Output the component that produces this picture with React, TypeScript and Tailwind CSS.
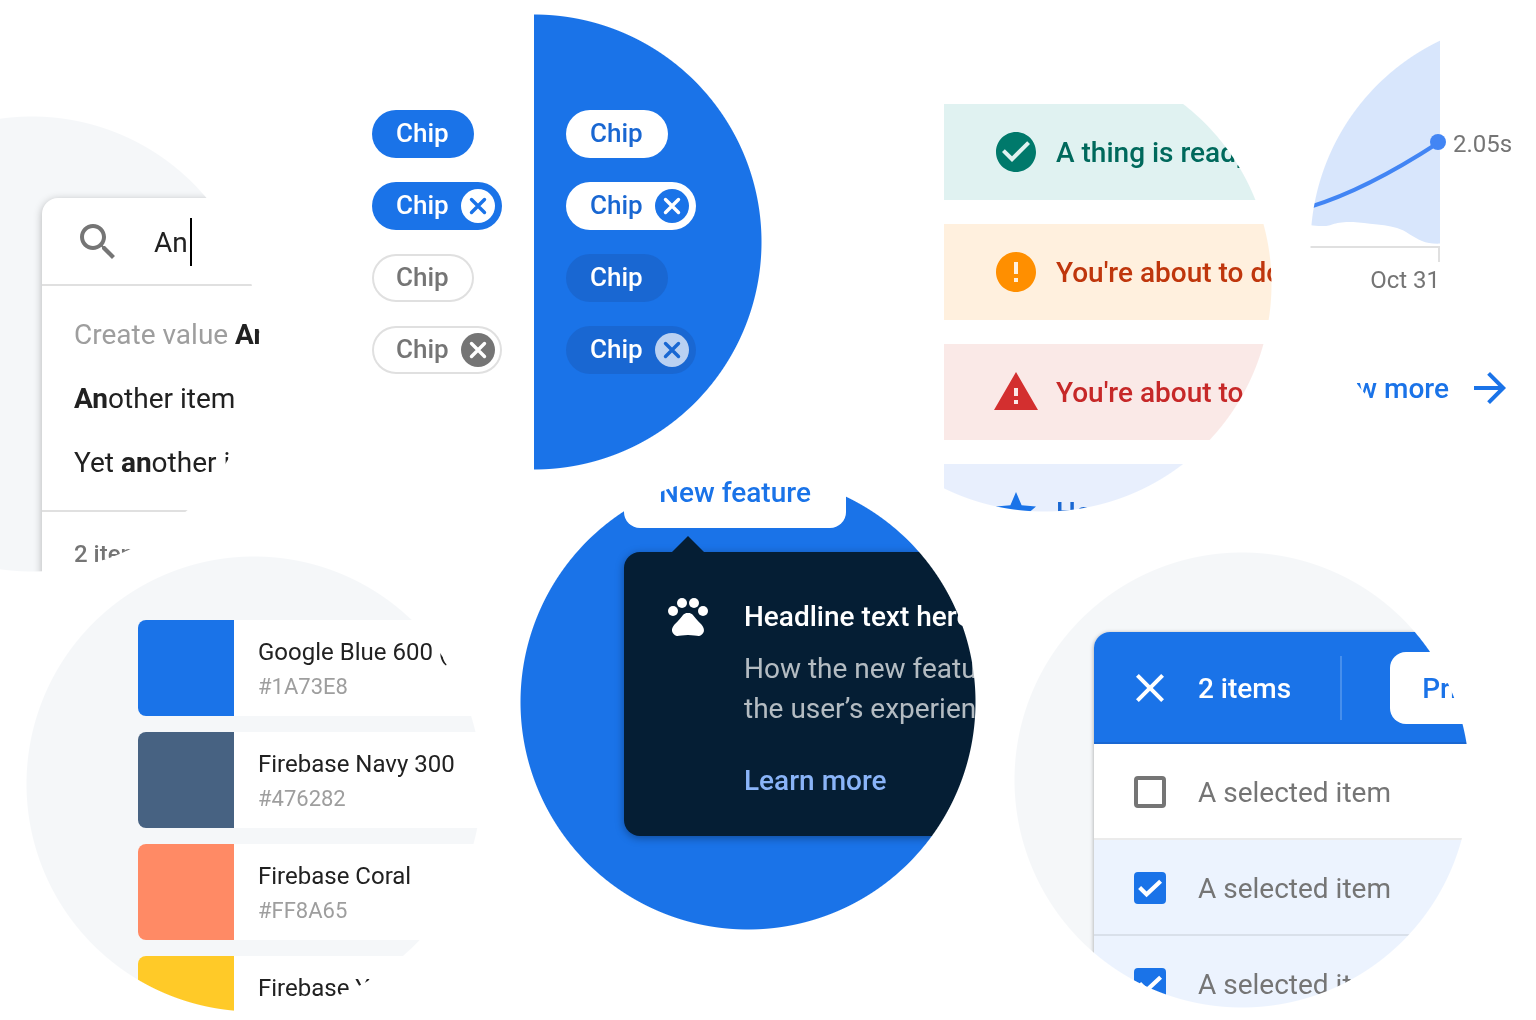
import type { ReactNode } from "react";

const CHECK_CIRCLE =
  "M12 2C6.48 2 2 6.48 2 12s4.48 10 10 10 10-4.48 10-10S17.52 2 12 2zm-2 15l-5-5 1.41-1.41L10 14.17l7.59-7.59L19 8l-9 9z";
const ERROR =
  "M12 2C6.48 2 2 6.48 2 12s4.48 10 10 10 10-4.48 10-10S17.52 2 12 2zm1 15h-2v-2h2v2zm0-4h-2V7h2v6z";
const WARNING = "M1 21h22L12 2 1 21zm12-3h-2v-2h2v2zm0-4h-2v-4h2v4z";
const STAR =
  "M12 17.27L18.18 21l-1.64-7.03L22 9.24l-7.19-.61L12 2 9.19 8.63 2 9.24l5.46 4.73L5.82 21z";
const SEARCH =
  "M15.5 14h-.79l-.28-.27C15.41 12.59 16 11.11 16 9.5 16 5.91 13.09 3 9.5 3S3 5.91 3 9.5 5.91 16 9.5 16c1.61 0 3.09-.59 4.23-1.57l.27.28v.79l5 4.99L20.49 19l-4.99-5zm-6 0C7.01 14 5 11.99 5 9.5S7.01 5 9.5 5 14 7.01 14 9.5 11.99 14 9.5 14z";
const CLOSE =
  "M19 6.41L17.59 5 12 10.59 6.41 5 5 6.41 10.59 12 5 17.59 6.41 19 12 13.41 17.59 19 19 17.59 13.41 12z";
const ARROW = "M12 4l-1.41 1.41L16.17 11H4v2h12.17l-5.58 5.59L12 20l8-8z";

function Icon({ d, className = "" }: { d: string; className?: string }) {
  return (
    <svg viewBox="0 0 24 24" fill="currentColor" aria-hidden="true" className={`size-12 shrink-0 ${className}`}>
      <path d={d} />
    </svg>
  );
}

/* The radial mask trims the whole disc as one layer, so no background colour fringes its edge. */
function Disc({ className, children }: { className: string; children: ReactNode }) {
  return (
    <section
      className={`size-[456px] shrink-0 overflow-hidden whitespace-nowrap [mask-image:radial-gradient(circle_closest-side,#000_calc(100%-1px),transparent_100%)] ${className}`}
    >
      {children}
    </section>
  );
}

function SearchDisc() {
  return (
    <Disc className="mt-[116px] bg-[#f5f7f9] pt-[82px] pl-[238px]">
      <div className="h-[400px] rounded-tl-2xl bg-white text-[28px] text-[#212121] shadow-[0_2px_8px_rgba(0,0,0,0.28)]">
        <label className="flex h-[88px] items-center gap-8 pl-8 shadow-[inset_0_-2px_0_#e0e0e0]">
          <Icon d={SEARCH} className="text-[#757575]" />
          <span className="flex h-12 items-center gap-0.5">
            <input
              type="text"
              aria-label="Search values"
              defaultValue="An"
              className="field-sizing-content bg-transparent pt-0.5 outline-none"
            />
            <span className="h-12 w-0.5 bg-black" />
          </span>
        </label>
        <ul className="border-b-2 border-[#e0e0e0] pt-[17px] pb-[15px] pl-8 leading-[64px]">
          <li className="text-[#9e9e9e]">
            Create value <b className="font-bold text-[#212121]">An</b>
          </li>
          <li>
            <b className="font-bold">An</b>other item
          </li>
          <li>
            Yet <b className="font-bold">an</b>other item
          </li>
        </ul>
        <p className="pt-6 pl-8 text-2xl/9 font-medium text-[#757575]">2 items</p>
      </div>
    </Disc>
  );
}

type ChipProps = { box: string; icon?: string; cross?: string };

function Chip({ box, icon, cross }: ChipProps) {
  const shape = "flex h-12 items-center justify-between rounded-full pl-6 text-[26px] font-medium";
  if (!icon) {
    return (
      <button className={`${shape} w-[102px] ${box}`}>
        <span className="pb-0.5">Chip</span>
      </button>
    );
  }
  return (
    <button className={`${shape} w-[130px] pr-1 ${box}`}>
      <span className="pb-0.5">Chip</span>
      <svg viewBox="0 0 40 40" className={`size-10 shrink-0 ${icon}`} aria-hidden="true">
        <circle cx="20" cy="20" r="17" fill="currentColor" />
        <path
          d="M13.5 13.5l13 13M26.5 13.5l-13 13"
          fill="none"
          strokeWidth="3.4"
          strokeLinecap="round"
          className={cross}
        />
      </svg>
    </button>
  );
}

function ChipsDisc() {
  return (
    <Disc className="mt-3.5 grid grid-cols-2">
      <div className="flex flex-col items-start gap-6 bg-white pt-24 pl-[66px]">
        <Chip box="bg-[#1a73e8] text-white" />
        <Chip box="bg-[#1a73e8] text-white" icon="text-white" cross="stroke-[#1a73e8]" />
        <Chip box="text-[#757575] shadow-[inset_0_0_0_2px_#e0e0e0]" />
        <Chip
          box="text-[#757575] shadow-[inset_0_0_0_2px_#e0e0e0]"
          icon="text-[#757575]"
          cross="stroke-white"
        />
      </div>
      <div className="flex flex-col items-start gap-6 bg-[#1a73e8] pt-24 pl-8">
        <Chip box="bg-white text-[#1967d2]" />
        <Chip box="bg-white text-[#1967d2]" icon="text-[#1a73e8]" cross="stroke-white" />
        <Chip box="bg-[#1967d2] text-white" />
        <Chip box="bg-[#1967d2] text-white" icon="text-[#bad1f2]" cross="stroke-[#1967d2]" />
      </div>
    </Disc>
  );
}

const banners = [
  { d: CHECK_CIRCLE, text: "A thing is ready", box: "bg-[#e0f2f1] text-[#00695c]", icon: "text-[#00796b]" },
  { d: ERROR, text: "You're about to do it", box: "bg-[#fff0de] text-[#bf360c]", icon: "text-[#ff8f00]" },
  { d: WARNING, text: "You're about to fail", box: "bg-[#fae9e7] text-[#c62828]", icon: "text-[#d32f2f]" },
  { d: STAR, text: "Here's a tip", box: "bg-[#e8effd] text-[#1967d2]", icon: "text-[#1a73e8]" },
];

function BannersDisc() {
  return (
    <Disc className="-mr-2 mt-14 ml-2 flex flex-col gap-6 bg-white pt-12 pl-32">
      {banners.map((b) => (
        <div
          key={b.text}
          role="status"
          className={`flex h-24 shrink-0 items-center gap-4 pl-12 text-[28px] font-medium ${b.box}`}
        >
          <Icon d={b.d} className={b.icon} />
          <span className="pt-0.5">{b.text}</span>
        </div>
      ))}
    </Disc>
  );
}

function ChartDisc() {
  return (
    <Disc className="mt-[18px] bg-white text-2xl/7 text-[#757575]">
      <div className="flex items-start gap-[7px]">
        <svg viewBox="0 0 136 228" className="h-[228px] w-[136px] shrink-0" role="img" aria-label="Duration up to Oct 31">
          <path
            d="M0 0H130V225.6C122 225.8 117 225 112 223C103 219.5 96 212.5 87 210C79 207.3 70 207 60 205.7C50 204.6 42 203.8 34 204.2C27 204.4 24 206 20 207.2C14 208.8 6 208 0 207Z"
            fill="#d8e6fc"
          />
          <path d="M-4 190C38 178 88 151 128 125" fill="none" stroke="#4285f4" strokeWidth="4" />
          <circle cx="128" cy="124" r="8" fill="#4285f4" />
        </svg>
        <span className="mt-28">2.05s</span>
      </div>
      <div className="h-4 w-[130px] border-t-2 border-r-2 border-[#e0e0e0]" />
      <p className="mt-1 w-[130px] text-right">Oct 31</p>
      <a href="#more" className="mt-[70px] flex w-[204px] items-center justify-end gap-[17px] text-[28px] font-medium text-[#1a73e8]">
        <span className="pt-0.5">View more</span>
        <Icon d={ARROW} />
      </a>
    </Disc>
  );
}

const swatches = [
  { name: "Google Blue 600 (Primary)", hex: "#1A73E8", fill: "bg-[#1a73e8]" },
  { name: "Firebase Navy 300", hex: "#476282", fill: "bg-[#476282]" },
  { name: "Firebase Coral", hex: "#FF8A65", fill: "bg-[#ff8a65]" },
  { name: "Firebase Yellow", hex: "#FFCA28", fill: "bg-[#ffca28]" },
];

function SwatchesDisc() {
  return (
    <Disc className="mt-[82px] bg-[#f5f7f9]">
      <ul className="flex flex-col gap-4 pt-16 pl-28">
        {swatches.map((s) => (
          <li key={s.hex} className="flex h-24 items-stretch gap-6 overflow-hidden rounded-l-lg bg-white">
            <span className={`w-24 shrink-0 ${s.fill}`} />
            <span className="flex flex-col gap-px pt-3.5">
              <span className="text-2xl/9 text-[#212121]">{s.name}</span>
              <span className="text-[22px]/8 text-[#9e9e9e]">{s.hex}</span>
            </span>
          </li>
        ))}
      </ul>
    </Disc>
  );
}

function FeatureDisc() {
  return (
    <Disc className="flex flex-col bg-[#1a73e8] pl-26">
      <button className="-mt-[18px] h-[72px] w-[222px] shrink-0 rounded-2xl bg-white pt-0.5 text-[28px] font-medium text-[#1a73e8]">
        New feature
      </button>
      <div className="mt-2 ml-12 h-4 w-8 shrink-0 bg-[#051e34] [clip-path:polygon(50%_0,100%_100%,0_100%)]" />
      <div className="flex h-[284px] gap-8 rounded-l-2xl bg-[#051e34] pt-10 pl-10 text-[28px] text-white shadow-[0_2px_8px_rgba(0,0,0,0.35)]">
        <svg viewBox="0 0 24 24" fill="currentColor" aria-hidden="true" className="size-12 shrink-0">
          <circle cx="4.5" cy="9.5" r="2.5" />
          <circle cx="9" cy="5.5" r="2.5" />
          <circle cx="15" cy="5.5" r="2.5" />
          <circle cx="19.5" cy="9.5" r="2.5" />
          <path d="M17.34 14.86c-.87-1.02-1.6-1.89-2.48-2.91-.46-.54-1.05-1.08-1.75-1.32-.11-.04-.22-.07-.33-.09-.25-.04-.52-.04-.78-.04s-.53 0-.79.05c-.11.02-.22.05-.33.09-.7.24-1.28.78-1.75 1.32-.87 1.02-1.6 1.89-2.48 2.91-1.31 1.31-2.92 2.76-2.62 4.79.29 1.02 1.02 2.03 2.33 2.32.73.15 3.06-.44 5.54-.44h.18c2.48 0 4.81.58 5.54.44 1.31-.29 2.04-1.31 2.33-2.32.31-2.04-1.3-3.49-2.61-4.8z" />
        </svg>
        <div className="pt-px">
          <h2 className="leading-12 font-medium">Headline text here</h2>
          <p className="mt-2 leading-10 text-white/70">
            How the new feature
            <br />
            the user’s experience
          </p>
          <a href="#learn" className="mt-8 block leading-10 font-medium text-[#8ab4f8]">
            Learn more
          </a>
        </div>
      </div>
    </Disc>
  );
}

const rows = [
  { id: "item-1", checked: false },
  { id: "item-2", checked: true },
  { id: "item-3", checked: true },
];

function SelectionDisc() {
  return (
    <Disc className="mt-[78px] bg-[#f5f7f9] pt-20 pl-20">
      <div className="rounded-tl-2xl bg-white text-[28px] shadow-[0_1px_4px_rgba(0,0,0,0.35)]">
        <div className="flex h-28 items-center rounded-tl-2xl bg-[#1a73e8] pl-8 text-white shadow-[inset_0_-2px_0_#1967d2]">
          <button aria-label="Clear selection">
            <Icon d={CLOSE} />
          </button>
          <span className="ml-6 pt-0.5 font-medium">2 items</span>
          <span className="mr-12 ml-[49px] h-16 w-0.5 shrink-0 bg-white/20" />
          <button className="h-[72px] shrink-0 rounded-2xl bg-white px-8 pt-0.5 font-medium text-[#1a73e8]">
            Primary
          </button>
        </div>
        <ul>
          {rows.map((r) => (
            <li
              key={r.id}
              className={`h-24 shadow-[inset_0_-2px_0_rgba(0,0,0,0.08)] ${r.checked ? "bg-[#ecf3fe]" : "bg-white"}`}
            >
              <label className="flex h-full items-center gap-8 pl-10 text-[#757575]">
                <span className="relative size-8 shrink-0">
                  <input
                    type="checkbox"
                    defaultChecked={r.checked}
                    className="peer block size-8 appearance-none rounded border-4 border-[#757575] checked:border-[#1a73e8] checked:bg-[#1a73e8]"
                  />
                  <svg
                    viewBox="0 0 32 32"
                    aria-hidden="true"
                    className="pointer-events-none absolute inset-0 hidden size-8 text-white peer-checked:block"
                  >
                    <path d="M5.6 15.4l7 7L26.6 9.2" fill="none" stroke="currentColor" strokeWidth="4.2" />
                  </svg>
                </span>
                <span className="pt-0.5">A selected item</span>
              </label>
            </li>
          ))}
        </ul>
      </div>
    </Disc>
  );
}

export default function App() {
  return (
    <main className="overflow-hidden bg-white pb-2 font-['Roboto',sans-serif]">
      <div className="-mr-[230px] -ml-[196px] flex items-start justify-between">
        <SearchDisc />
        <ChipsDisc />
        <BannersDisc />
        <ChartDisc />
      </div>
      <div className="-mt-[98px] flex items-start justify-between pr-[66px] pl-[26px]">
        <SwatchesDisc />
        <FeatureDisc />
        <SelectionDisc />
      </div>
    </main>
  );
}
